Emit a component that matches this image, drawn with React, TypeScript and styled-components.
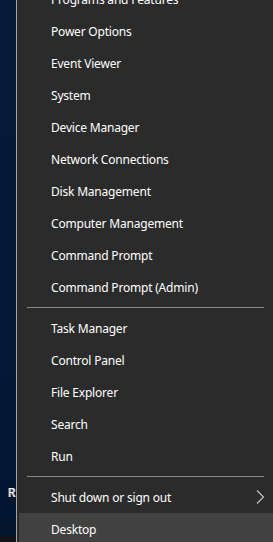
import { Fragment } from 'react';
import styled, { createGlobalStyle } from 'styled-components';

const GlobalStyle = createGlobalStyle`
  html, body {
    margin: 0;
    padding: 0;
    background: #2b2b2b;
    overflow: hidden;
  }
`;

const Screen = styled.div`
  display: flex;
  width: 273px;
  height: 542px;
  overflow: hidden;
  font-family: 'Noto Sans', 'Liberation Sans', sans-serif;
  font-size: 12px;
  letter-spacing: -0.2px;
`;

const Desktop = styled.div`
  width: 16px;
  flex: none;
  display: flex;
  flex-direction: column;
  background: linear-gradient(180deg, #061a3b 0%, #041939 60%, #03152f 100%);
`;

const DesktopLabel = styled.span`
  margin-top: 486px;
  padding-left: 8px;
  color: #ffffff;
  font-size: 12px;
  line-height: 14px;
  text-shadow: -1px 0 0 rgba(255, 170, 60, 0.6), 1px 0 0 rgba(80, 160, 255, 0.6);
`;

const Taskbar = styled.div`
  margin-top: auto;
  height: 6px;
  background: #101418;
`;

const Menu = styled.div`
  flex: 1;
  display: flex;
  flex-direction: column;
  background: #2b2b2b;
  border-left: 1px solid #a3a3a3;
  margin-top: -17px;
`;

const Item = styled.div<{ $active?: boolean }>`
  display: flex;
  align-items: center;
  height: 32px;
  flex: none;
  margin-left: 2px;
  padding-left: 32px;
  padding-right: 8px;
  color: #ffffff;
  background: ${(p) => (p.$active ? '#414141' : 'transparent')};
  white-space: nowrap;
`;

const Label = styled.span`
  flex: 1;
`;

const Separator = styled.div`
  height: 1px;
  flex: none;
  margin: 4px 9px 4px 10px;
  background: #8a8a8a;
`;

const Chevron = () => (
  <svg width="9" height="14" viewBox="0 0 9 14">
    <path d="M1 0.5 L7.5 7 L1 13.5" fill="none" stroke="#c8c8c8" strokeWidth="1.1" />
  </svg>
);

const groups: string[][] = [
  [
    'Programs and Features',
    'Power Options',
    'Event Viewer',
    'System',
    'Device Manager',
    'Network Connections',
    'Disk Management',
    'Computer Management',
    'Command Prompt',
    'Command Prompt (Admin)',
  ],
  ['Task Manager', 'Control Panel', 'File Explorer', 'Search', 'Run'],
];

const App = () => (
  <>
    <GlobalStyle />
    <Screen>
      <Desktop>
        <DesktopLabel>R</DesktopLabel>
        <Taskbar />
      </Desktop>
      <Menu>
        {groups.map((group, i) => (
          <Fragment key={i}>
            {group.map((name) => (
              <Item key={name}>
                <Label>{name}</Label>
              </Item>
            ))}
            <Separator />
          </Fragment>
        ))}
        <Item>
          <Label>Shut down or sign out</Label>
          <Chevron />
        </Item>
        <Item $active>
          <Label>Desktop</Label>
        </Item>
      </Menu>
    </Screen>
  </>
);

export default App;
